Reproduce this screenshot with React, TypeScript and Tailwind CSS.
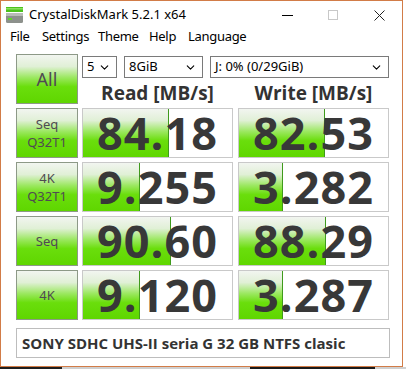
import { ChevronDown } from "lucide-react";

const green =
  "bg-[linear-gradient(to_bottom,#f2f5f0_0%,#e0f0d6_24%,#9be860_47%,#6ade0c_66%,#5fd600_100%)]";

type Row = {
  label: string[];
  read: string;
  readBar: number;
  write: string;
  writeBar: number;
};

const rows: Row[] = [
  { label: ["Seq", "Q32T1"], read: "84.18", readBar: 86, write: "82.53", writeBar: 86 },
  { label: ["4K", "Q32T1"], read: "9.255", readBar: 57, write: "3.282", writeBar: 44 },
  { label: ["Seq"], read: "90.60", readBar: 88, write: "88.29", writeBar: 87 },
  { label: ["4K"], read: "9.120", readBar: 57, write: "3.287", writeBar: 44 },
];

const menu = [
  { t: "File", w: "w-[32px]" },
  { t: "Settings", w: "w-[56px]" },
  { t: "Theme", w: "w-[51px]" },
  { t: "Help", w: "w-[39px]" },
  { t: "Language", w: "w-[60px]" },
];

function AppIcon() {
  return (
    <svg width="17" height="16" viewBox="0 0 17 16">
      <rect x="0" y="0" width="17" height="5" fill="#4cc21c" />
      <rect x="0" y="1" width="17" height="1.5" fill="#8be060" />
      <rect x="0" y="6" width="17" height="10" rx="1.5" fill="#8d918c" />
      <rect x="0" y="6" width="17" height="3" fill="#b8bcb6" />
      <rect x="2" y="11" width="4" height="2" fill="#5fd62a" />
    </svg>
  );
}

function Select({ w, text }: { w: string; text: string }) {
  return (
    <div
      className={`${w} h-[22px] border border-[#7a7a7a] bg-white flex items-center justify-between pl-[4px] pr-[5px] text-[13px] text-black`}
    >
      <span>{text}</span>
      <ChevronDown className="w-[13px] h-[13px]" strokeWidth={2} />
    </div>
  );
}

function ValueBox({ value, bar }: { value: string; bar: number }) {
  return (
    <div className="relative w-[151px] h-[50px] border border-[#c9c9c9] bg-white">
      <div
        className={`absolute left-0 top-0 bottom-0 ${green} border-r border-[#3f9a1c]`}
        style={{ width: bar }}
      />
      <div className="relative h-full flex items-center justify-center font-['Open_Sans'] font-bold text-[45px] leading-[48px] tracking-[1px] text-[#383838]">
        {value}
      </div>
    </div>
  );
}

function LabelButton({ lines, big }: { lines: string[]; big?: boolean }) {
  return (
    <div
      className={`w-[62px] h-[50px] border border-[#8d9987] ${green} flex flex-col items-center justify-center text-[#4f4a52] leading-[18px] ${
        big ? "text-[18px]" : "text-[13px]"
      }`}
    >
      {lines.map((l) => (
        <span key={l}>{l}</span>
      ))}
    </div>
  );
}

export default function App() {
  return (
    <div className="w-[406px] h-[369px] bg-white font-['Noto_Sans',sans-serif] flex flex-col overflow-hidden">
      <div className="w-[403px] h-[367px] border border-[#d27c47] bg-white flex flex-col">
        {/* title bar */}
        <div className="h-[28px] flex items-center pl-[5px]">
          <AppIcon />
          <span className="ml-[6px] text-[13px] text-black">
            CrystalDiskMark 5.2.1 x64
          </span>
          <div className="ml-auto flex items-center h-full">
            <div className="w-[46px] flex justify-center">
              <div className="w-[11px] h-px bg-black" />
            </div>
            <div className="w-[46px] flex justify-center">
              <div className="w-[10px] h-[10px] border border-[#c8c8c8]" />
            </div>
            <div className="w-[46px] flex justify-center">
              <svg width="11" height="11" viewBox="0 0 11 11">
                <path d="M0.5 0.5 L10.5 10.5 M10.5 0.5 L0.5 10.5" stroke="#222" strokeWidth="1" />
              </svg>
            </div>
          </div>
        </div>

        {/* menu */}
        <div className="h-[16px] flex items-center pl-[9px] text-[13px] tracking-[-0.3px] text-black">
          {menu.map((m) => (
            <span key={m.t} className={m.w}>
              {m.t}
            </span>
          ))}
        </div>

        {/* content */}
        <div className="pl-[15px] pt-[9px] flex flex-col gap-[4px]">
          <div className="flex gap-[4px]">
            <LabelButton lines={["All"]} big />
            <div className="flex flex-col">
              <div className="flex gap-[7px] mt-[2px]">
                <Select w="w-[35px]" text="5" />
                <Select w="w-[79px]" text="8GiB" />
                <Select w="w-[179px]" text="J: 0% (0/29GiB)" />
              </div>
              <div className="flex gap-[5px] mt-[4px] font-['Open_Sans'] font-bold text-[19px] text-[#333] leading-[22px]">
                <div className="w-[151px] text-center">Read [MB/s]</div>
                <div className="w-[151px] text-center">Write [MB/s]</div>
              </div>
            </div>
          </div>

          {rows.map((r) => (
            <div key={r.read} className="flex gap-[4px]">
              <LabelButton lines={r.label} />
              <div className="flex gap-[5px]">
                <ValueBox value={r.read} bar={r.readBar} />
                <ValueBox value={r.write} bar={r.writeBar} />
              </div>
            </div>
          ))}

          <div className="mt-[4px] w-[374px] h-[30px] border border-[#bdbdbd] bg-white flex items-center pl-[5px] font-['Open_Sans'] font-bold text-[15px] text-[#333]">
            SONY SDHC UHS-II seria G 32 GB NTFS clasic
          </div>
        </div>
      </div>
      <div className="flex h-[2px]">
        <div className="w-[62px] bg-[#1e1e1e]" />
        <div className="w-[188px] bg-[#d0d0d0]" />
        <div className="w-[125px] bg-[#1a1a1a]" />
        <div className="flex-1 bg-[#d0d0d0]" />
      </div>
    </div>
  );
}
